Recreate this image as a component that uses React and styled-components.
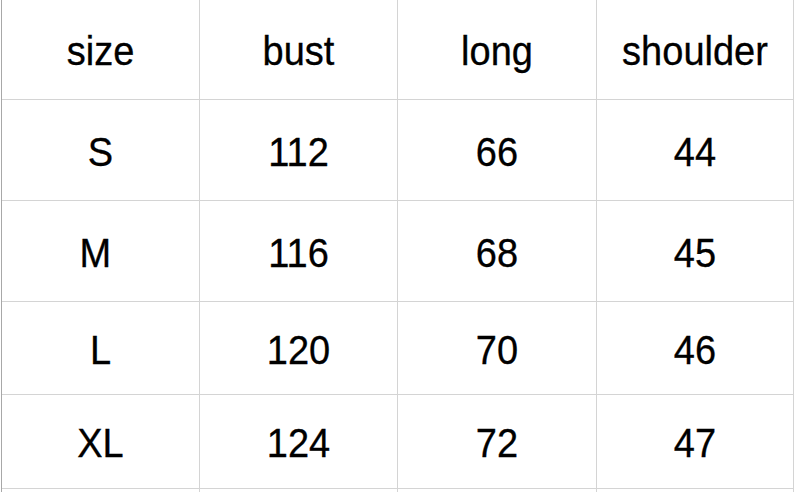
import React from "react";
import styled, { createGlobalStyle } from "styled-components";

const rows = [
  ["size", "bust", "long", "shoulder"],
  ["S", "112", "66", "44"],
  ["M\u00a0", "116", "68", "45"],
  ["L", "120", "70", "46"],
  ["XL", "124", "72", "47"],
  ["", "", "", ""],
];

const heights = [100, 101, 101, 93, 94, 3];

const App = () => {
  return (
    <>
      <Global />
      <Sheet>
        {rows.map((row, r) =>
          row.map((val, c) => (
            <Cell key={r + "-" + c} h={heights[r]} last={r === rows.length - 1}>
              <Txt>{val}</Txt>
            </Cell>
          ))
        )}
      </Sheet>
    </>
  );
};

export default App;

const Global = createGlobalStyle`
  html, body {
    margin: 0;
    padding: 0;
    background: #fff;
    overflow: hidden;
  }
`;

const Sheet = styled.div`
  display: grid;
  grid-template-columns: 198px 198px 199px 197px;
  margin-left: 1px;
  border-left: 1px solid #a8a8a8;
  width: max-content;
  font-family: "Liberation Sans", Arial, sans-serif;
  color: #000;
`;

const Cell = styled.div`
  box-sizing: border-box;
  height: ${(p) => p.h}px;
  border-right: 1px solid #d4d4d4;
  border-bottom: ${(p) => (p.last ? "none" : "1px solid #d4d4d4")};
  padding-top: 3px;
  display: flex;
  align-items: center;
  justify-content: center;
  overflow: hidden;
`;

const Txt = styled.span`
  display: inline-block;
  font-size: 38px;
  line-height: 1;
  transform: scaleY(1.06);
  white-space: pre;
  -webkit-text-stroke: 0.3px #000;
`;
